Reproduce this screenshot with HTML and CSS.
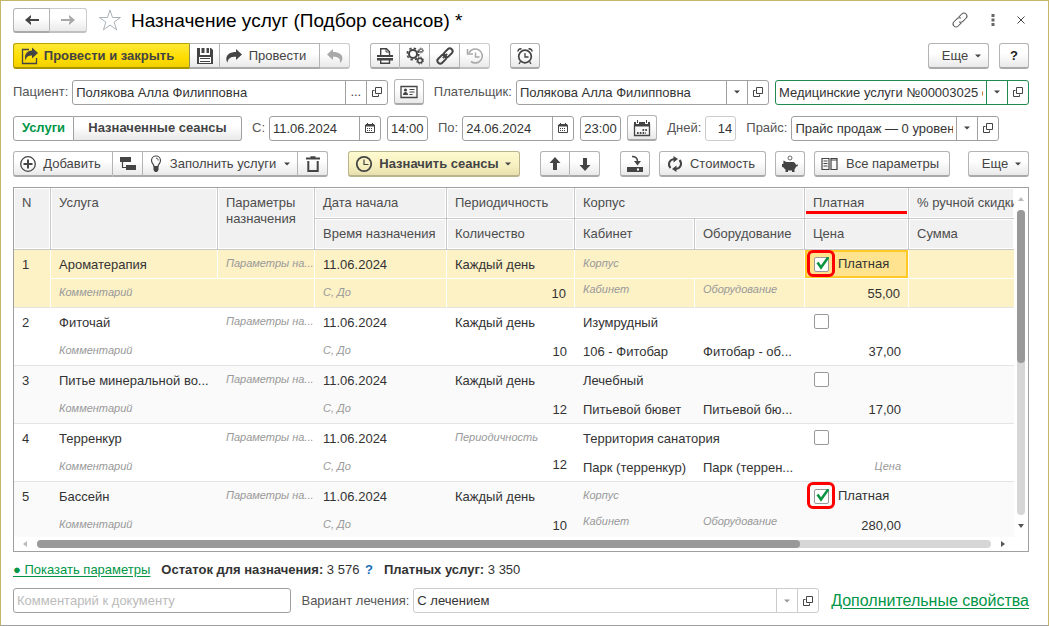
FILE: index.html
```html
<!DOCTYPE html>
<html lang="ru">
<head>
<meta charset="utf-8">
<title>Назначение услуг (Подбор сеансов)</title>
<link rel="stylesheet" href="styles.css">
</head>
<body>
<svg class="sprite" aria-hidden="true">
  <symbol id="i-left" viewBox="0 0 16 16"><path d="M2 8h13" stroke="currentColor" stroke-width="2" fill="none"/><path d="M1 8l6-5v2.500L5 8l2 2.500V13z" fill="currentColor"/></symbol>
  <symbol id="i-right" viewBox="0 0 16 16"><path d="M1 8h13" stroke="currentColor" stroke-width="2" fill="none"/><path d="M15 8L9 3v2.500L11 8l-2 2.500V13z" fill="currentColor"/></symbol>
  <symbol id="i-star" viewBox="0 0 24 24"><path d="M12 2l2.500 7.500h8l-6.400 4.600 2.500 7.700-6.600-4.700-6.600 4.700 2.500-7.700L1.500 9.500h8z" fill="none" stroke="#a9b0b6"/></symbol>
  <symbol id="i-link" viewBox="0 0 18 18"><g transform="rotate(-45 9 9)" fill="none" stroke="currentColor" stroke-linecap="round"><path d="M7.500 12H3.500a3 3 0 0 1 0-6h4.500a3 3 0 0 1 2.800 2"/><path d="M10.500 6h4a3 3 0 0 1 0 6h-4.500a3 3 0 0 1-2.800-2"/></g></symbol>
  <symbol id="i-linkbold" viewBox="0 0 18 18"><g transform="rotate(-45 9 9)" fill="none" stroke="currentColor" stroke-width="2"><rect x="-.5" y="6.200" width="10" height="5.600" rx="2.800"/><rect x="8.500" y="6.200" width="10" height="5.600" rx="2.800"/><path d="M6 9h6"/></g></symbol>
  <symbol id="i-post" viewBox="0 0 18 18"><path d="M8 2.500H1.500v14h14V11" fill="none" stroke="currentColor" stroke-width="1.300"/><path d="M11 .5L17 6l-6 5.500V8.500C8 8.500 5.500 9 4.500 13.500c-1.500-5 .5-9.700 6.500-9.900z" fill="currentColor"/></symbol>
  <symbol id="i-save" viewBox="0 0 18 18"><path d="M1 1h3v7h10V1h1l2 2v14H1z" fill="currentColor"/><path d="M5.500 1h3v5h-3zM10.500 1H13v5h-2.500z" fill="currentColor"/><path d="M3 10h12v6H3z" fill="#fff"/><path d="M4 11.500h10M4 14.500h10" stroke="currentColor"/></symbol>
  <symbol id="i-fwd" viewBox="0 0 18 18"><path d="M11 2l6 5.500-6 5.500v-3.200C6 9.800 3 11 2.500 15.500.500 13 0 5.200 11 5z" fill="currentColor"/></symbol>
  <symbol id="i-back" viewBox="0 0 18 18"><path d="M7 2L1 7.500 7 13V9.800c5 0 7.500 1.200 7 6.200C18 13 18 5.200 7 5z" fill="currentColor"/></symbol>
  <symbol id="i-print" viewBox="0 0 18 18"><path d="M4.700 8V1.700h5.800l3 3V8" fill="none" stroke="currentColor" stroke-width="1.400"/><path d="M10 1v4h4" fill="none" stroke="currentColor"/><path d="M1 8h16v2H1zM1 11h16v2.500H1z" fill="currentColor"/><path d="M4.700 12.700h8.800v3.600H4.700z" fill="#fff" stroke="currentColor" stroke-width="1.400"/></symbol>
  <symbol id="i-gears" viewBox="0 0 18 18"><circle cx="7" cy="7" r="4" fill="none" stroke="currentColor" stroke-width="2"/><circle cx="7" cy="7" r="5.800" fill="none" stroke="currentColor" stroke-width="1.600" stroke-dasharray="2.400 2.155"/><circle cx="14" cy="13.500" r="2.300" fill="none" stroke="currentColor" stroke-width="1.500"/><circle cx="14" cy="13.500" r="3.500" fill="none" stroke="currentColor" stroke-dasharray="1.500 1.250"/><circle cx="15" cy="3.500" r="1.500" fill="none" stroke="currentColor"/><circle cx="15" cy="3.500" r="2.400" fill="none" stroke="currentColor" stroke-dasharray="1 .885"/></symbol>
  <symbol id="i-hist" viewBox="0 0 18 18"><path d="M3 6A7 7 0 1 1 5 14.500" fill="none" stroke="currentColor" stroke-width="1.600"/><path d="M1.500 2v5H7" fill="none" stroke="currentColor" stroke-width="1.600"/><path d="M9.500 5.500V10h4" fill="none" stroke="currentColor" stroke-width="1.400"/></symbol>
  <symbol id="i-alarm" viewBox="0 0 18 18"><circle cx="9" cy="9.500" r="6.300" fill="none" stroke="currentColor" stroke-width="1.700"/><path d="M9 6v4h3.500M4.500 14.500L3 17M13.500 14.500L15 17" fill="none" stroke="currentColor" stroke-width="1.300"/><path d="M2 4.500C2 2.500 3.500 1.500 5.500 2M16 4.500C16 2.500 14.500 1.500 12.500 2" fill="none" stroke="currentColor" stroke-width="1.600"/></symbol>
  <symbol id="i-open" viewBox="0 0 10 10"><path d="M3.500.500h6v6h-6z" fill="none" stroke="currentColor"/><path d="M2.500 3.500h-2v6h6v-2" fill="none" stroke="currentColor"/></symbol>
  <symbol id="i-card" viewBox="0 0 18 14"><path d="M1 1.500h16v11H1z" fill="none" stroke="currentColor" stroke-width="1.300"/><circle cx="5.500" cy="5" r="1.600" fill="currentColor"/><path d="M3 10c0-4 5-4 5 0zM9.500 4h5v1h-5zM9.500 6.500h5v1h-5zM9.500 9h3v1h-3z" fill="currentColor"/></symbol>
  <symbol id="i-cal" viewBox="0 0 10 10"><path d="M.5 2h9v7.500h-9z" fill="none" stroke="currentColor"/><path d="M1 1h8v2.500H1zM2 0h1v2H2zM7 0h1v2H7z" fill="currentColor"/><path d="M2 5.500h6M2 7.500h6" stroke="currentColor" stroke-dasharray="1 1"/></symbol>
  <symbol id="i-calbig" viewBox="0 0 18 18"><path d="M1.500 5v11.500h15V5" fill="none" stroke="currentColor" stroke-width="1.300"/><path d="M1 3h2v2h3V3h6v2h3V3h2v4.500H1zM4 1h1v3H4zM13 1h1v3h-1z" fill="currentColor"/><path d="M9.500 11H15M4 14h9" stroke="currentColor" stroke-width="1.800" stroke-dasharray="1.600 1.200"/></symbol>
  <symbol id="i-plus" viewBox="0 0 18 18"><circle cx="9" cy="9" r="7.300" fill="none" stroke="currentColor" stroke-width="1.300"/><path d="M9 4.500v9M4.500 9h9" stroke="currentColor" stroke-width="2"/></symbol>
  <symbol id="i-tree" viewBox="0 0 18 18"><path d="M1 2h11v5H1zM7 10h10v5H7z" fill="currentColor"/><path d="M3.500 7v5.500H7" fill="none" stroke="currentColor" stroke-width="1.200"/></symbol>
  <symbol id="i-bulb" viewBox="0 0 12 18"><path d="M4 11.500C4 9 1.500 8.500 1.500 5.500a4.500 4.500 0 0 1 9 0c0 3-2.500 3.500-2.500 6z" fill="none" stroke="currentColor" stroke-width="1.200"/><path d="M6 3.200c1.500 0 2.200 1 2.200 2.300" fill="none" stroke="currentColor"/><path d="M3.500 11.500h5V15L7 17H5l-1.500-2z" fill="currentColor"/></symbol>
  <symbol id="i-trash" viewBox="0 0 18 18"><path d="M2 3.500h14M6.500 2.200h5" stroke="currentColor" stroke-width="1.800"/><path d="M4.300 6v10h9.400V6" fill="none" stroke="currentColor" stroke-width="2"/></symbol>
  <symbol id="i-clock" viewBox="0 0 18 18"><circle cx="9" cy="9" r="7.200" fill="none" stroke="currentColor" stroke-width="1.800"/><path d="M9 4.500V9.500h4.500" fill="none" stroke="currentColor" stroke-width="1.200"/></symbol>
  <symbol id="i-up" viewBox="0 0 12 14"><path d="M6 0l5.500 6H8v7H4V6H.5z" fill="currentColor"/></symbol>
  <symbol id="i-down" viewBox="0 0 12 14"><path d="M6 14L.5 8H4V1h4v7h3.500z" fill="currentColor"/></symbol>
  <symbol id="i-disk" viewBox="0 0 18 18"><path d="M1 12h16v5H1z" fill="currentColor"/><path d="M11 13.500h2v2h-2z" fill="#fff"/><path d="M6 1.500c4 0 5.500 2 5.500 5" fill="none" stroke="currentColor" stroke-width="1.500"/><path d="M8 6h7l-3.500 4.500z" fill="currentColor"/></symbol>
  <symbol id="i-refresh" viewBox="0 0 18 18"><path d="M4.500 13C1.500 9.500 3 4.500 8.500 4M13.500 5c3 3.500 1.500 8.500-4 9" fill="none" stroke="currentColor" stroke-width="2"/><path d="M7.500 1L12 4 7.500 7.500zM10.500 10.500L6 14l4.500 3z" fill="currentColor"/></symbol>
  <symbol id="i-pig" viewBox="0 0 18 18"><circle cx="9" cy="3" r="2" fill="none" stroke="currentColor" stroke-width=".8"/><path d="M2.500 5.500l3 1.500h7c1.500.5 2 1.500 2.500 3l2-.8-.5 2-1.500.5c-.3 1-1 2-1.500 2.500V17H11v-1.500H7V17H4.500v-2.500C3.500 14 3 13 2.700 12.500L1 12V9h1.300z" fill="currentColor"/></symbol>
  <symbol id="i-cols" viewBox="0 0 18 14"><path d="M1 1.500h7v11H1zM10 1.500h6v11h-6z" fill="none" stroke="currentColor" stroke-width="1.200"/><path d="M2.500 4h4M2.500 6.500h4M2.500 9h4M10 3h6" stroke="currentColor"/></symbol>
  <symbol id="i-caret" viewBox="0 0 6 4"><path d="M0 .5h6l-3 3z" fill="currentColor"/></symbol>
  <symbol id="i-check" viewBox="0 0 15 15"><path d="M3.500 5.500l3.500 5L14.500 0" fill="none" stroke="#0b9444" stroke-width="2.600"/></symbol>
</svg>

<main class="window">
  <header class="row">
    <div class="group">
      <button class="btn nav" aria-label="Назад"><svg class="ic16"><use href="#i-left"/></svg></button>
      <button class="btn nav off" aria-label="Вперед"><svg class="ic16"><use href="#i-right"/></svg></button>
    </div>
    <button class="plain star" aria-label="В избранное"><svg class="ic24"><use href="#i-star"/></svg></button>
    <h1>Назначение услуг (Подбор сеансов) *</h1>
    <div class="wintools">
      <button class="plain" aria-label="Ссылка"><svg class="ic18"><use href="#i-link"/></svg></button>
      <button class="plain" aria-label="Меню"><svg width="4" height="12"><path d="M.5 0h3v3h-3zM.5 4.500h3v3h-3zM.5 9h3v3h-3z" fill="#666"/></svg></button>
      <button class="plain" aria-label="Закрыть"><svg width="8" height="8"><path d="M.5.5l7 7M7.500.5l-7 7" stroke="#444"/></svg></button>
    </div>
  </header>

  <div class="row">
    <div class="group">
      <button class="btn main"><svg class="ic18"><use href="#i-post"/></svg>Провести и закрыть</button>
      <button class="btn icon" aria-label="Записать"><svg class="ic18"><use href="#i-save"/></svg></button>
      <button class="btn post"><svg class="ic18"><use href="#i-fwd"/></svg>Провести</button>
      <button class="btn icon off" aria-label="Отмена проведения"><svg class="ic18"><use href="#i-back"/></svg></button>
    </div>
    <div class="group wide-gap">
      <button class="btn icon" aria-label="Печать"><svg class="ic18"><use href="#i-print"/></svg></button>
      <button class="btn icon" aria-label="Настройки"><svg class="ic18"><use href="#i-gears"/></svg></button>
      <button class="btn icon" aria-label="Связи"><svg class="ic18"><use href="#i-linkbold"/></svg></button>
      <button class="btn icon off" aria-label="История"><svg class="ic18"><use href="#i-hist"/></svg></button>
    </div>
    <button class="btn icon wide-gap" aria-label="Напоминание"><svg class="ic18"><use href="#i-alarm"/></svg></button>
    <button class="btn more push">Еще<svg class="caret"><use href="#i-caret"/></svg></button>
    <button class="btn icon help">?</button>
  </div>

  <div class="row fields">
    <label for="patient">Пациент:</label>
    <div class="combo patient">
      <input id="patient" type="text" value="Полякова Алла Филипповна">
      <button aria-label="Выбрать">...</button>
      <button aria-label="Открыть пациента"><svg class="ic10"><use href="#i-open"/></svg></button>
    </div>
    <button class="btn icon" aria-label="Карточка"><svg class="card"><use href="#i-card"/></svg></button>
    <label class="next" for="payer">Плательщик:</label>
    <div class="combo payer">
      <div class="pick"><select id="payer"><option>Полякова Алла Филипповна</option></select><span class="arrow"><svg class="caret"><use href="#i-caret"/></svg></span></div>
      <button aria-label="Открыть плательщика"><svg class="ic10"><use href="#i-open"/></svg></button>
    </div>
    <div class="combo contract">
      <div class="pick"><select aria-label="Договор"><option>Медицинские услуги №00003025 от 11.06.2024</option></select><span class="arrow"><svg class="caret"><use href="#i-caret"/></svg></span></div>
      <button aria-label="Открыть договор"><svg class="ic10"><use href="#i-open"/></svg></button>
    </div>
  </div>

  <div class="row fields">
    <div class="group tabs">
      <button class="btn tab active">Услуги</button>
      <button class="btn tab">Назначенные сеансы</button>
    </div>
    <label class="next" for="from">С:</label>
    <div class="combo date"><input id="from" type="text" value="11.06.2024"><button aria-label="Календарь начала"><svg class="ic10"><use href="#i-cal"/></svg></button></div>
    <div class="combo time"><input aria-label="Время начала" type="text" value="14:00"></div>
    <label class="next" for="to">По:</label>
    <div class="combo date"><input id="to" type="text" value="24.06.2024"><button aria-label="Календарь окончания"><svg class="ic10"><use href="#i-cal"/></svg></button></div>
    <div class="combo time"><input aria-label="Время окончания" type="text" value="23:00"></div>
    <button class="btn icon" aria-label="Период"><svg class="ic18"><use href="#i-calbig"/></svg></button>
    <label class="next" for="days">Дней:</label>
    <div class="combo days light"><input id="days" type="text" value="14"></div>
    <label class="next" for="price">Прайс:</label>
    <div class="combo price">
      <div class="pick"><select id="price"><option>Прайс продаж — 0 уровень цен</option></select><span class="arrow"><svg class="caret"><use href="#i-caret"/></svg></span></div>
      <button aria-label="Открыть прайс"><svg class="ic10"><use href="#i-open"/></svg></button>
    </div>
  </div>

  <div class="row">
    <div class="group">
      <button class="btn add"><svg class="ic18"><use href="#i-plus"/></svg>Добавить</button>
      <button class="btn icon" aria-label="Добавить группу"><svg class="ic18"><use href="#i-tree"/></svg></button>
      <button class="btn fill"><svg class="bulb"><use href="#i-bulb"/></svg>Заполнить услуги<svg class="caret"><use href="#i-caret"/></svg></button>
      <button class="btn icon" aria-label="Удалить"><svg class="ic18"><use href="#i-trash"/></svg></button>
    </div>
    <button class="btn assign wide-gap"><svg class="ic18"><use href="#i-clock"/></svg>Назначить сеансы<svg class="caret"><use href="#i-caret"/></svg></button>
    <div class="group wide-gap">
      <button class="btn icon" aria-label="Вверх"><svg class="varrow"><use href="#i-up"/></svg></button>
      <button class="btn icon" aria-label="Вниз"><svg class="varrow"><use href="#i-down"/></svg></button>
    </div>
    <button class="btn icon wide-gap" aria-label="Загрузить"><svg class="ic18"><use href="#i-disk"/></svg></button>
    <button class="btn cost"><svg class="ic18"><use href="#i-refresh"/></svg>Стоимость</button>
    <button class="btn icon near" aria-label="Копилка"><svg class="ic18"><use href="#i-pig"/></svg></button>
    <button class="btn all near"><svg class="card"><use href="#i-cols"/></svg>Все параметры</button>
    <button class="btn more push">Еще<svg class="caret"><use href="#i-caret"/></svg></button>
  </div>

  <section class="grid">
    <div class="pane">
      <table>
        <colgroup><col class="c-n"><col class="c-service"><col class="c-params"><col class="c-date"><col class="c-period"><col class="c-room"><col class="c-equip"><col class="c-paid"><col></colgroup>
        <thead>
          <tr><th rowspan="2">N</th><th rowspan="2">Услуга</th><th rowspan="2" class="wrap">Параметры назначения</th><th>Дата начала</th><th>Периодичность</th><th colspan="2">Корпус</th><th class="marked">Платная</th><th>% ручной скидки</th></tr>
          <tr><th>Время назначения</th><th>Количество</th><th>Кабинет</th><th>Оборудование</th><th>Цена</th><th>Сумма</th></tr>
        </thead>
        <tbody class="selected">
          <tr><td rowspan="2">1</td><td>Ароматерапия</td><td class="hint">Параметры на...</td><td>11.06.2024</td><td>Каждый день</td><td colspan="2" class="hint">Корпус</td><td class="current check"><label class="paid ring"><input type="checkbox" checked><svg><use href="#i-check"/></svg>Платная</label></td><td></td></tr>
          <tr><td colspan="2" class="hint low">Комментарий</td><td class="hint low">С, До</td><td class="num">10</td><td class="hint">Кабинет</td><td class="hint">Оборудование</td><td class="num">55,00</td><td></td></tr>
        </tbody>
        <tbody>
          <tr><td rowspan="2">2</td><td>Фиточай</td><td class="hint">Параметры на...</td><td>11.06.2024</td><td>Каждый день</td><td colspan="2">Изумрудный</td><td class="check"><label class="paid"><input type="checkbox" aria-label="Платная"></label></td><td></td></tr>
          <tr><td colspan="2" class="hint low">Комментарий</td><td class="hint low">С, До</td><td class="num">10</td><td>106 - Фитобар</td><td>Фитобар - об...</td><td class="num">37,00</td><td></td></tr>
        </tbody>
        <tbody class="odd">
          <tr><td rowspan="2">3</td><td>Питье минеральной во...</td><td class="hint">Параметры на...</td><td>11.06.2024</td><td>Каждый день</td><td colspan="2">Лечебный</td><td class="check"><label class="paid"><input type="checkbox" aria-label="Платная"></label></td><td></td></tr>
          <tr><td colspan="2" class="hint low">Комментарий</td><td class="hint low">С, До</td><td class="num">12</td><td>Питьевой бювет</td><td>Питьевой бю...</td><td class="num">17,00</td><td></td></tr>
        </tbody>
        <tbody>
          <tr><td rowspan="2">4</td><td>Терренкур</td><td class="hint">Параметры на...</td><td>11.06.2024</td><td class="hint">Периодичность</td><td colspan="2">Территория санатория</td><td class="check"><label class="paid"><input type="checkbox" aria-label="Платная"></label></td><td></td></tr>
          <tr><td colspan="2" class="hint low">Комментарий</td><td class="hint low">С, До</td><td class="num high">12</td><td>Парк (терренкур)</td><td>Парк (террен...</td><td class="num hint low">Цена</td><td></td></tr>
        </tbody>
        <tbody class="odd">
          <tr><td rowspan="2">5</td><td>Бассейн</td><td class="hint">Параметры на...</td><td>11.06.2024</td><td>Каждый день</td><td colspan="2" class="hint">Корпус</td><td class="check"><label class="paid ring"><input type="checkbox" checked><svg><use href="#i-check"/></svg>Платная</label></td><td></td></tr>
          <tr><td colspan="2" class="hint low">Комментарий</td><td class="hint low">С, До</td><td class="num">10</td><td class="hint">Кабинет</td><td class="hint">Оборудование</td><td class="num">280,00</td><td></td></tr>
        </tbody>
      </table>
    </div>
    <div class="vbar"><svg width="6" height="4" class="dim"><path d="M0 4h6L3 0z"/></svg><div class="track"><div class="thumb"></div></div><svg width="6" height="4"><path d="M0 0h6L3 4z"/></svg></div>
    <div class="hbar"><svg width="4" height="6" class="dim"><path d="M4 0v6L0 3z"/></svg><div class="track"><div class="thumb"></div></div><svg width="4" height="6"><path d="M0 0v6l4-3z"/></svg></div>
  </section>

  <div class="info">
    <a href="#params">● Показать параметры</a>
    <span><b>Остаток для назначения:</b> 3 576 <a class="q" href="#help">?</a></span>
    <span><b>Платных услуг:</b> 3 350</span>
  </div>

  <footer class="row fields foot">
    <div class="combo comment"><input type="text" aria-label="Комментарий к документу" placeholder="Комментарий к документу"></div>
    <label class="next" for="variant">Вариант лечения:</label>
    <div class="combo variant light">
      <div class="pick"><select id="variant"><option>С лечением</option></select><span class="arrow"><svg class="caret"><use href="#i-caret"/></svg></span></div>
      <button aria-label="Открыть вариант"><svg class="ic10"><use href="#i-open"/></svg></button>
    </div>
    <a class="extra" href="#extra">Дополнительные свойства</a>
  </footer>
</main>
</body>
</html>
```
FILE: styles.css
```css
*, *::before { box-sizing: border-box; }
body {
  margin: 0;
  font: 13px/16px "Liberation Sans", Arial, sans-serif;
  color: #333;
  background: #fff;
}
button, input, select { font: inherit; color: inherit; margin: 0; }
button { cursor: pointer; white-space: nowrap; }
svg { display: block; flex: none; }
.sprite { position: absolute; width: 0; height: 0; }
.ic10 { width: 10px; height: 10px; }
.ic16 { width: 16px; height: 16px; }
.ic18 { width: 18px; height: 18px; }
.ic24 { width: 24px; height: 24px; }
.card { width: 18px; height: 14px; }
.bulb { width: 12px; height: 18px; }
.varrow { width: 12px; height: 14px; }
.caret { width: 6px; height: 4px; }

.window {
  display: flex;
  flex-direction: column;
  gap: 10px;
  height: 100vh;
  padding: 6px 19px 12px 12px;
  border: 1px solid #c6b668;
  border-bottom-color: #a0a0a0;
}
.row { display: flex; align-items: center; height: 26px; flex: none; }
.row.foot { height: 25px; }
.group { display: flex; }
.wide-gap { margin-left: 20px; }
.near { margin-left: 9px; }
.push { margin-left: auto; }

h1 { margin: 0; padding-top: 2px; font-size: 19px; line-height: 24px; font-weight: 400; color: #000; }
.plain { display: flex; border: 0; padding: 0; background: none; color: #555; }
.star { margin: 0 9px 0 11px; }
.wintools { display: flex; align-items: center; gap: 22px; margin: 0 4px 0 auto; }

.btn {
  display: flex;
  align-items: center;
  justify-content: center;
  height: 26px;
  padding: 1px 0 0;
  border: 1px solid #b4b4b4;
  border-bottom: 2px solid #a9a9a9;
  border-radius: 3px;
  background: linear-gradient(#fff 40%, #e9e9e9);
  color: #444;
}
.group .btn:not(:first-child) { border-left-width: 0; border-top-left-radius: 0; border-bottom-left-radius: 0; }
.group .btn:not(:last-child) { border-top-right-radius: 0; border-bottom-right-radius: 0; }
.btn.icon { width: 30px; }
.btn.nav { width: 37px; height: 25px; }
.btn.off { color: #a8a8a8; border-color: #ccc; border-bottom-color: #c0c0c0; }
.btn.main {
  width: 177px;
  gap: 5px;
  padding-right: 8px;
  font-weight: 700;
  border-color: #b9a100 #8f8f50 #a99500 #b9a100;
  background: linear-gradient(#ffe936, #ffdd00 60%, #f2d000);
}
.btn.post { width: 100px; gap: 6px; padding-right: 8px; }
.btn.more { width: 61px; gap: 7px; padding-left: 6px; }
.btn.help { margin-left: 10px; font-weight: 700; color: #222; }
.btn.add { width: 100px; gap: 6px; padding-right: 6px; }
.btn.fill { width: 155px; gap: 8px; }
.btn.assign {
  width: 172px;
  gap: 6px;
  padding-right: 2px;
  font-weight: 700;
  border-color: #b9b48c;
  background: linear-gradient(#fffbd0, #f6efc0 60%, #e8e0ae);
}
.btn.cost { width: 107px; gap: 6px; padding-right: 4px; margin-left: 9px; }
.btn.all { width: 136px; gap: 7px; padding-right: 4px; }
.btn.tab { width: 168px; height: 25px; padding: 0; font-weight: 700; border: 1px solid #a0a0a0; }
.btn.tab.active { width: 61px; color: #009646; background: #fff; }

.fields { gap: 6px; }
.fields label { color: #555; white-space: nowrap; }
.fields label + .combo { margin-left: -2px; }
.fields .next { margin-left: 4px; }
.combo {
  display: flex;
  height: 25px;
  min-width: 0;
  border: 1px solid #a0a0a0;
  border-radius: 3px;
  background: #fff;
  overflow: hidden;
}
.combo input {
  flex: 1;
  width: 100%;
  min-width: 0;
  border: 0;
  padding: 1px 3px 0;
  background: none;
  outline: 0;
}
.combo input::placeholder { color: #bbb; }
.combo button {
  display: flex;
  align-items: center;
  justify-content: center;
  flex: none;
  width: 21px;
  padding: 0;
  border: 0;
  border-left: 1px solid #a0a0a0;
  background: none;
  color: #444;
}
.pick { display: grid; flex: 1; min-width: 0; }
.pick select {
  grid-area: 1 / 1;
  width: 100%;
  min-width: 0;
  padding: 1px 24px 0 3px;
  border: 0;
  outline: 0;
  appearance: none;
  background: none;
}
.arrow {
  grid-area: 1 / 1;
  justify-self: end;
  display: flex;
  align-items: center;
  justify-content: center;
  width: 21px;
  border-left: 1px solid #a0a0a0;
  pointer-events: none;
  color: #444;
}
.patient { flex: 316 1 0; }
.payer { flex: 253 1 0; }
.contract { flex: 254 1 0; border-color: #1f8a50; }
.contract button, .contract .arrow { border-color: #1f8a50; }
.date { width: 112px; }
.time { width: 41px; }
.days { width: 31px; }
.days input { text-align: right; }
.price { width: 208px; }
.comment { flex: 280 1 0; }
.variant { flex: 409 1 0; }
.light, .light button, .light .arrow { border-color: #ccc; }
.light .arrow { color: #999; }

.grid {
  display: grid;
  grid-template-columns: 1fr 14px;
  grid-template-rows: 1fr 14px;
  flex: 1;
  min-height: 0;
  border: 1px solid #a0a0a0;
}
.pane { overflow: hidden; min-width: 0; min-height: 0; }
table { width: 100%; table-layout: fixed; border-collapse: separate; border-spacing: 0; }
.c-n { width: 37px; }
.c-service { width: 167px; }
.c-params { width: 97px; }
.c-date { width: 132px; }
.c-period { width: 128px; }
.c-room { width: 120px; }
.c-equip { width: 110px; }
.c-paid { width: 104px; }
th, td {
  padding: 7px 6px 0 8px;
  text-align: left;
  vertical-align: top;
  font-weight: 400;
  white-space: nowrap;
  overflow: hidden;
  text-overflow: ellipsis;
}
th {
  height: 31px;
  color: #4d4d4d;
  background: #f1f1f1;
  border-right: 1px solid #c8c8c8;
  border-bottom: 1px solid #c8c8c8;
  box-shadow: inset 0 0 0 1px #fff;
  text-overflow: clip;
}
th:last-child { border-right: 0; }
.wrap { white-space: normal; }
.marked { background: linear-gradient(#f00, #f00) 1px 23px / 101px 3px no-repeat #f1f1f1; }
td { height: 29px; }
tbody tr:last-child td, tbody td[rowspan] { border-bottom: 1px solid #e4e4e4; }
.odd td { background: #fafafa; }
.selected td {
  background: #fdf1c6;
  border-right: 1px solid #fff;
}
.selected tr:first-child td:not([rowspan]) { border-bottom: 1px solid #fff; }
.selected td:last-child { border-right: 0; }
.hint { font-size: 11px; font-style: italic; color: #999; padding-top: 5px; padding-right: 0; }
tr:last-child > .hint { padding-top: 2px; }
tr:last-child > .low { padding-top: 5px; }
td.num { text-align: right; padding-right: 8px; }
td.high { padding-top: 4px; }
.selected .current { background: #ffe38f; box-shadow: inset 0 0 0 2px #ffc926; }
td.check { padding-top: 6px; overflow: visible; }
.paid { position: relative; display: inline-grid; grid-template-columns: 15px auto; column-gap: 9px; align-items: center; margin-left: 1px; }
.paid input {
  grid-area: 1 / 1;
  width: 15px;
  height: 15px;
  margin: 0;
  appearance: none;
  border: 1px solid #999;
  border-radius: 2px;
  background: #fff;
}
.paid svg { grid-area: 1 / 1; width: 15px; height: 15px; pointer-events: none; z-index: 1; overflow: visible; }
.ring::before {
  content: "";
  position: absolute;
  left: -7px;
  top: -6px;
  width: 28px;
  height: 27px;
  border: 3px solid #f00;
  border-radius: 6px;
}

.vbar, .hbar { display: flex; align-items: center; background: #fff; fill: #555; }
.vbar { flex-direction: column; padding: 9px 0; gap: 9px; }
.hbar { grid-column: 1; padding: 0 9px; gap: 10px; }
.dim { fill: #bbb; }
.track { flex: 1; border-radius: 4px; background: #d6d6d6; }
.vbar .track { width: 8px; }
.hbar .track { height: 8px; }
.thumb { border-radius: 4px; background: #999; }
.vbar .thumb { width: 8px; height: 50%; }
.hbar .thumb { width: 80%; height: 8px; }

.info { display: flex; gap: 11px; flex: none; white-space: nowrap; }
.info a, .extra { color: #009646; text-underline-offset: 2px; }
.info .q { color: #1a6fb5; text-decoration: none; font-weight: 700; margin-left: 2px; }
.extra { margin-left: 6px; font-size: 16px; white-space: nowrap; }
```
